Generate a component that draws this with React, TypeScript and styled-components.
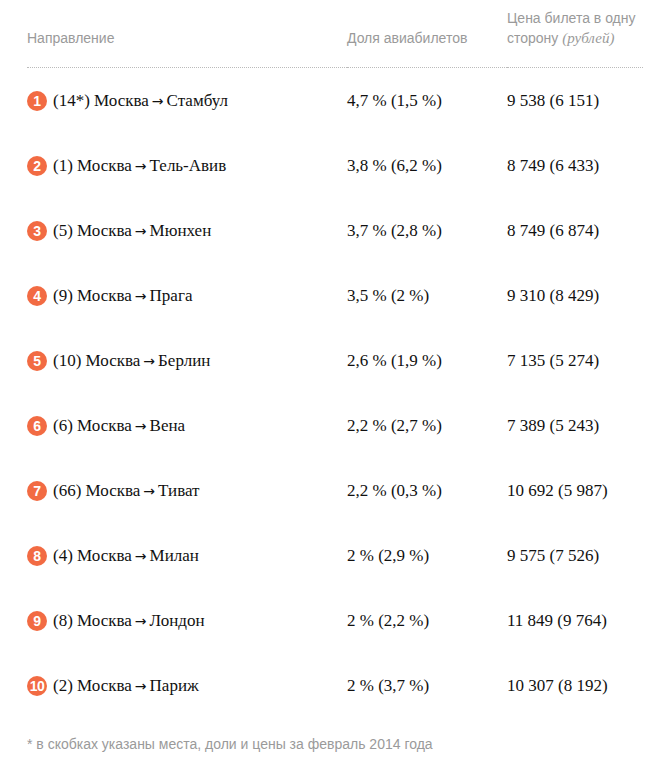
import React from "react";
import styled, { createGlobalStyle } from "styled-components";

const Global = createGlobalStyle`
  html, body { margin: 0; padding: 0; background: #fff; }
`;

const Page = styled.div`
  padding: 8px 7px 0 27px;
`;

const Grid = styled.div`
  display: grid;
  grid-template-columns: 320px 160px 1fr;
`;

const HeadCell = styled.div`
  display: flex;
  align-items: flex-end;
  padding-bottom: 19px;
  font-family: "Liberation Sans", Arial, sans-serif;
  font-size: 14px;
  line-height: 20px;
  color: #9a9a9a;
  height: 40px;
  border-bottom: 1px dotted #bbb;
`;

const Muted = styled.i`
  font-family: "Liberation Serif", serif;
  font-size: 15px;
`;

const Cell = styled.div`
  display: flex;
  align-items: center;
  height: 65px;
  font-family: "Liberation Serif", Georgia, serif;
  font-size: 17px;
  color: #111;
  white-space: pre;
`;

const Arrow = styled.span`
  font-family: "DejaVu Sans", sans-serif;
  font-size: 14px;
  padding: 0 3px;
`;

const Badge = styled.span`
  display: inline-flex;
  align-items: center;
  justify-content: center;
  width: 20px;
  height: 20px;
  border-radius: 50%;
  background: #f26b43;
  color: #fff;
  font-family: "Liberation Sans", Arial, sans-serif;
  font-weight: bold;
  font-size: 14px;
  margin-right: 6px;
  letter-spacing: -0.5px;
`;

const Note = styled.div`
  margin-top: 18px;
  font-family: "Liberation Sans", Arial, sans-serif;
  font-size: 14px;
  color: #9a9a9a;
`;

const rows = [
  ["(14*)", "Стамбул", "4,7 % (1,5 %)", "9 538 (6 151)"],
  ["(1)", "Тель-Авив", "3,8 % (6,2 %)", "8 749 (6 433)"],
  ["(5)", "Мюнхен", "3,7 % (2,8 %)", "8 749 (6 874)"],
  ["(9)", "Прага", "3,5 % (2 %)", "9 310 (8 429)"],
  ["(10)", "Берлин", "2,6 % (1,9 %)", "7 135 (5 274)"],
  ["(6)", "Вена", "2,2 % (2,7 %)", "7 389 (5 243)"],
  ["(66)", "Тиват", "2,2 % (0,3 %)", "10 692 (5 987)"],
  ["(4)", "Милан", "2 % (2,9 %)", "9 575 (7 526)"],
  ["(8)", "Лондон", "2 % (2,2 %)", "11 849 (9 764)"],
  ["(2)", "Париж", "2 % (3,7 %)", "10 307 (8 192)"],
];

export default function App() {
  return (
    <>
      <Global />
      <Page>
        <Grid>
          <HeadCell>Направление</HeadCell>
          <HeadCell>Доля авиабилетов</HeadCell>
          <HeadCell>
            <span>
              Цена билета в одну
              <br />
              сторону <Muted>(рублей)</Muted>
            </span>
          </HeadCell>
          {rows.map((r, i) => (
            <React.Fragment key={i}>
              <Cell>
                <Badge>{i + 1}</Badge>
                {r[0]} Москва<Arrow>→</Arrow>{r[1]}
              </Cell>
              <Cell>{r[2]}</Cell>
              <Cell>{r[3]}</Cell>
            </React.Fragment>
          ))}
        </Grid>
        <Note>* в скобках указаны места, доли и цены за февраль 2014 года</Note>
      </Page>
    </>
  );
}
